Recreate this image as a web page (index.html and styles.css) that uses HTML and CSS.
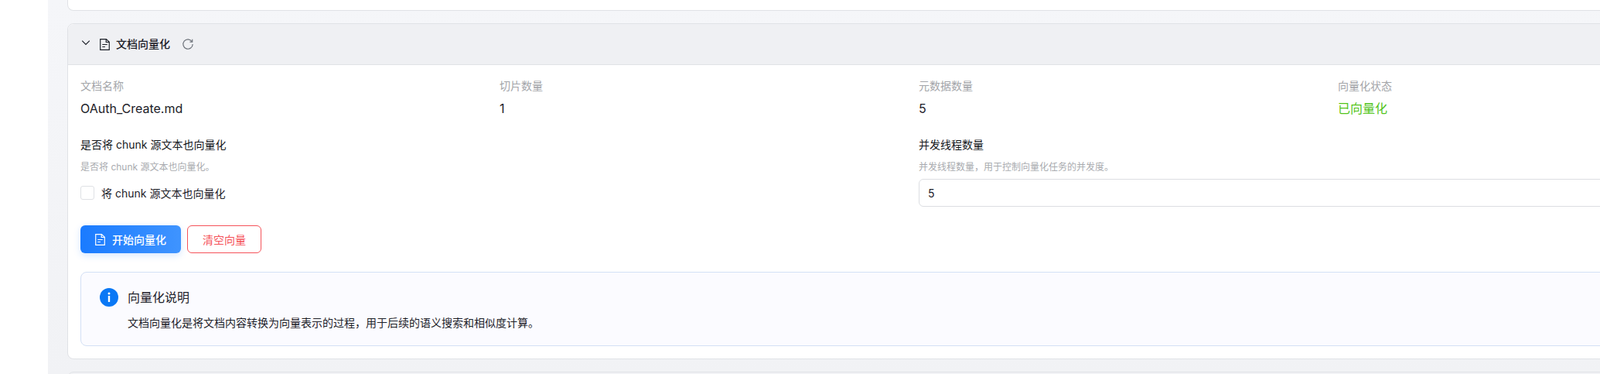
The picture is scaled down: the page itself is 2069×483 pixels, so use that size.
FILE: index.html
```html
<!DOCTYPE html>
<html lang="zh-CN">
<head>
  <meta charset="UTF-8">
  <title>文档向量化</title>
  <link rel="stylesheet" href="styles.css">
</head>
<body>
  <div class="layout">
    <div class="sidebar"></div>
    <div class="main">
      <div class="card card-prev"></div>

      <div class="card">
        <div class="card-header">
          <svg class="icon-chevron" width="14" height="14" viewBox="0 0 14 14" fill="none" stroke="#1d2129" stroke-width="1.2"><path d="M2.2 4.6 7 9.4l4.8-4.8"/></svg>
          <svg class="icon-file" width="13" height="15" viewBox="2 1 12 14" fill="none" stroke="#1d2129" stroke-width="1.1"><path d="M2.6 1.6h7.2l3.6 3.4v9.4H2.6z"/><path d="M9.6 1.6v3.6h3.8M5 8h6M5 10.8h3.4"/></svg>
          <span class="card-title">文档向量化</span>
          <svg class="icon-refresh" width="16" height="16" viewBox="0 0 14 14" fill="none" stroke="#6b7078" stroke-width="1"><path d="M11.6 4.2A5.4 5.4 0 1 0 12.4 7"/><path d="M12 1.6v2.9H9.1"/></svg>
        </div>

        <div class="card-body">
          <div class="stats">
            <div>
              <div class="stat-label">文档名称</div>
              <div class="stat-value">OAuth_Create.md</div>
            </div>
            <div>
              <div class="stat-label">切片数量</div>
              <div class="stat-value">1</div>
            </div>
            <div>
              <div class="stat-label">元数据数量</div>
              <div class="stat-value">5</div>
            </div>
            <div>
              <div class="stat-label">向量化状态</div>
              <div class="stat-value success">已向量化</div>
            </div>
          </div>

          <div class="form-row">
            <div class="form-item">
              <div class="form-label">是否将 chunk 源文本也向量化</div>
              <div class="form-hint">是否将 chunk 源文本也向量化。</div>
              <label class="check">
                <span class="check-box"></span>
                <span>将 chunk 源文本也向量化</span>
              </label>
            </div>
            <div class="form-item">
              <div class="form-label">并发线程数量</div>
              <div class="form-hint">并发线程数量，用于控制向量化任务的并发度。</div>
              <input class="form-input" type="text" value="5">
            </div>
          </div>

          <div class="actions">
            <button class="btn btn-primary">
              <svg width="13" height="15" viewBox="2 1 12 14" fill="none" stroke="#fff" stroke-width="1.1"><path d="M2.6 1.6h7.2l3.6 3.4v9.4H2.6z"/><path d="M9.6 1.6v3.6h3.8M5 8h6M5 10.8h3.4"/></svg>
              开始向量化
            </button>
            <button class="btn btn-danger">清空向量</button>
          </div>

          <div class="notice">
            <div class="notice-head">
              <svg width="24" height="24" viewBox="0 0 24 24"><circle cx="12" cy="12" r="12" fill="#0a78f5"/><rect x="10.8" y="10" width="2.4" height="8" rx=".6" fill="#fff"/><circle cx="12" cy="7" r="1.5" fill="#fff"/></svg>
              <span class="notice-title">向量化说明</span>
            </div>
            <div class="notice-text">文档向量化是将文档内容转换为向量表示的过程，用于后续的语义搜索和相似度计算。</div>
          </div>
        </div>
      </div>

      <div class="card card-next"></div>
    </div>
  </div>
</body>
</html>
```

FILE: styles.css
```css
html, body {
  margin: 0;
  height: 100%;
  overflow: hidden;
  background-color: #fff;
}
body {
  font-family: "Inter", "Noto Sans CJK SC", sans-serif;
  font-size: 14px;
  color: #1d2129;
}
.layout {
  display: flex;
  width: 2069px;
  height: 483px;
  overflow: hidden;
}
.sidebar {
  flex: 0 0 62px;
  background-color: #fff;
}
.main {
  flex: 1;
  min-width: 0;
  padding: 0 25px;
  background: linear-gradient(to bottom, #f5f6f9, #f1f2f5);
  display: flex;
  flex-direction: column;
  gap: 16px;
}
.card {
  width: 2200px;
  box-sizing: border-box;
  flex: none;
  background-color: #fff;
  border: 1px solid #e0e2e6;
  border-radius: 8px;
}
.card-prev {
  height: 14px;
  border-top: none;
  border-radius: 0 0 8px 8px;
}
.card-next {
  height: 20px;
  background-color: #f1f2f5;
}
.card-header {
  height: 52px;
  box-sizing: content-box;
  padding: 0 16px;
  border-bottom: 1px solid #e0e2e6;
  border-radius: 8px 8px 0 0;
  background-color: #eff0f3;
  display: flex;
  align-items: center;
}
.icon-chevron {
  margin-right: 11px;
  margin-top: -4px;
}
.icon-file {
  margin-right: 8px;
}
.card-title {
  font-weight: 500;
  line-height: 22px;
}
.icon-refresh {
  margin-left: 15px;
}
.card-body {
  padding: 16px;
}
.stats {
  display: grid;
  grid-template-columns: repeat(4, 542px);
}
.stat-label {
  line-height: 22px;
  color: #a3a5a9;
}
.stat-value {
  margin-top: 6px;
  font-size: 16px;
  line-height: 24px;
}
.success {
  color: #52c41a;
}
.form-row {
  margin-top: 24px;
  display: grid;
  grid-template-columns: 1084px 1084px;
}
.form-label {
  line-height: 22px;
  color: #14171c;
}
.form-hint {
  margin-top: 8px;
  margin-bottom: 5px;
  font-size: 12px;
  line-height: 20px;
  color: #a9abaf;
}
.check {
  display: flex;
  align-items: center;
  gap: 9px;
  height: 36px;
}
.check-box {
  width: 16px;
  height: 16px;
  border: 1px solid #dfe1e5;
  border-radius: 3px;
}
.form-input {
  display: block;
  width: 100%;
  height: 36px;
  box-sizing: border-box;
  padding: 0 11px;
  border: 1px solid #dcdee2;
  border-radius: 6px;
  font: inherit;
  color: #1d2129;
}
.actions {
  margin-top: 24px;
  display: flex;
  gap: 8px;
}
.btn {
  height: 36px;
  box-sizing: border-box;
  border-radius: 6px;
  font-family: inherit;
  font-size: 14px;
  display: flex;
  align-items: center;
  justify-content: center;
}
.btn-primary {
  width: 130px;
  gap: 9px;
  border: none;
  font-weight: 500;
  color: #fff;
  background: linear-gradient(to right, #1a7bff, #3f94ff);
  box-shadow: 0 3px 10px rgba(26, 123, 255, 0.18);
}
.btn-danger {
  width: 96px;
  border: 1px solid #f5535a;
  background-color: #fff;
  color: #f5535a;
}
.notice {
  margin-top: 24px;
  height: 96px;
  box-sizing: border-box;
  padding: 20px 24px;
  background-color: #fbfbff;
  border: 1px solid #d3e0f5;
  border-radius: 8px;
}
.notice-head {
  display: flex;
  align-items: center;
  gap: 12px;
}
.notice-title {
  font-size: 16px;
  line-height: 24px;
}
.notice-text {
  margin-top: 10px;
  margin-left: 36px;
  line-height: 22px;
}
```
